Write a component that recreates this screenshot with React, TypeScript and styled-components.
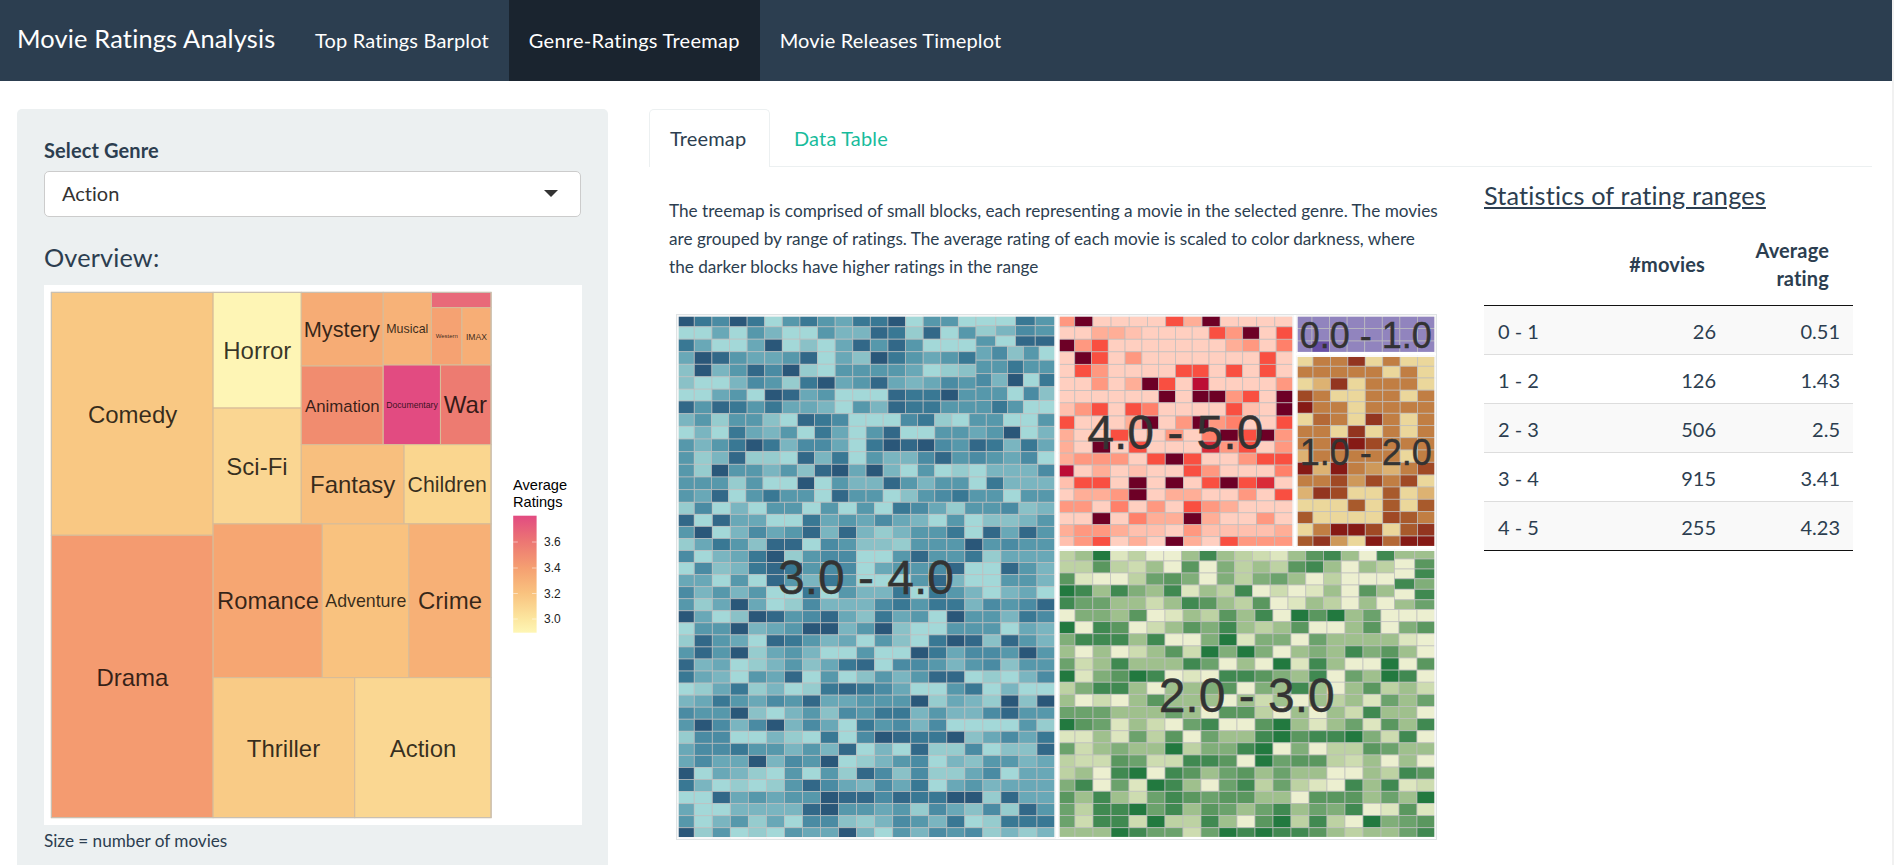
import React from 'react';
import styled, { createGlobalStyle } from 'styled-components';

const GlobalStyle = createGlobalStyle`
  * { box-sizing: border-box; }
  html, body { margin: 0; height: 100%; overflow: hidden; background: #fff; }
  body {
    font-family: Lato, "Liberation Sans", sans-serif;
    font-size: 20px;
    line-height: 1.42857;
    font-variant-ligatures: none;
    color: #2c3e50;
  }
`;

const Page = styled.div`
  width: 1892px;
  height: 865px;
  overflow: hidden;
`;
const Frame = styled.div`
  display: flex;
  width: 1894px;
  height: 865px;
  overflow: hidden;
  background: #f1f1f1;
  & > ${Page} { background: #fff; }
`;
const NavBar = styled.nav`
  display: flex;
  height: 81px;
  background: #2c3e50;
  color: #fff;
`;
const Brand = styled.div`
  width: 295px;
  padding: 20px 0 0 17px;
  font-size: 25.4px;
  line-height: 36px;
  letter-spacing: 0.17px;
  white-space: nowrap;
`;
const NavItem = styled.a<{ $active?: boolean }>`
  padding: 26px 20px 0;
  line-height: 29px;
  font-size: 20px;
  letter-spacing: ${(p) => (p.$active ? '0.27px' : '0.16px')};
  white-space: nowrap;
  background: ${(p) => (p.$active ? '#1a242f' : 'transparent')};
`;
const Main = styled.main`
  display: flex;
  align-items: flex-start;
  padding: 28px 20px 0 17px;
`;
const SideBar = styled.aside`
  width: 591px;
  height: 790px;
  flex: none;
  padding: 27px 26px 0 27px;
  background: #ecf0f1;
  border-radius: 5px;
`;
const Label = styled.div`
  font-weight: 700;
  line-height: 29px;
  letter-spacing: 0.12px;
  margin-bottom: 6px;
`;
const SelectBox = styled.div`
  display: flex;
  align-items: center;
  justify-content: space-between;
  width: 537px;
  height: 46px;
  padding: 0 22px 2px 17px;
  color: #333;
  background: #fff;
  border: 1px solid #ccc;
  border-radius: 5px;
`;
const Caret = styled.span`
  border: 7px solid transparent;
  border-top-color: #333;
  border-bottom: 0;
`;
const SubTitle = styled.h4`
  margin: 26px 0 14px;
  font-size: 25.3px;
  font-weight: 400;
  line-height: 28px;
  letter-spacing: 0.15px;
`;
const PlotCard = styled.div`
  width: 538px;
  height: 540px;
  background: #fff;
  svg { display: block; }
`;
const Note = styled.div`
  font-size: 17.2px;
  line-height: 32px;
  letter-spacing: -0.03px;
`;
const Content = styled.section`
  flex: none;
  width: 1223px;
  margin-left: 41px;
`;
const Tabs = styled.div`
  display: flex;
  height: 58px;
  border-bottom: 1px solid #ecf0f1;
`;
const Tab = styled.a<{ $active?: boolean }>`
  height: 58px;
  padding: ${(p) => (p.$active ? '14px 0 0 20px' : '15px 24px 0')};
  line-height: 28px;
  letter-spacing: 0.15px;
  color: ${(p) => (p.$active ? '#2c3e50' : '#18bc9c')};
  background: #fff;
  ${(p) => (p.$active ? 'width: 121px; border: 1px solid #ecf0f1; border-bottom: 0; border-radius: 5px 5px 0 0;' : 'height: 57px;')}
`;
const Columns = styled.div`
  display: flex;
  align-items: flex-start;
`;
const TreePanel = styled.div`
  width: 835px;
  flex: none;
  padding: 30px 0 0 20px;
`;
const Intro = styled.p`
  width: 785px;
  margin: 0 0 32px;
  font-size: 17.2px;
  letter-spacing: -0.008px;
  line-height: 28px;
  span { display: block; white-space: nowrap; }
`;
const TreeFrame = styled.div`
  margin-left: 7px;
  svg { display: block; }
`;
const StatsPanel = styled.div`
  width: 369px;
  padding-top: 11px;
`;
const StatsTitle = styled.h4`
  margin: 0;
  font-size: 25.3px;
  font-weight: 400;
  line-height: 34px;
  letter-spacing: 0.16px;
  text-decoration: underline;
  white-space: nowrap;
`;
const Table = styled.div`
  margin-top: 14px;
  border-bottom: 1px solid #111;
`;
const HeadRow = styled.div`
  display: grid;
  grid-template-columns: 115px 130px 124px;
  align-items: center;
  height: 80px;
  padding-bottom: 3px;
  border-bottom: 1px solid #111;
  font-weight: 700;
  line-height: 28px;
  letter-spacing: 0.15px;
  text-align: right;
  span { padding-right: 24px; }
`;
const BodyRow = styled.div`
  display: grid;
  grid-template-columns: 115px 130px 124px;
  height: 49px;
  line-height: 50px;
  text-align: right;
  border-top: 1px solid #ddd;
  &:nth-child(even) { background: #f9f9f9; }
  &:nth-child(2) { height: 48px; border-top: 0; }
  span { padding-right: 13px; }
  span:first-child { padding-left: 14px; text-align: left; }
`;

type Genre = [string, number, number, number, number, string, number, number, number];
/* name, left, top, right, bottom, fill, label size, label centre, label baseline */
const genres: Genre[] = [
  ['Comedy', 51.4, 292.4, 213.1, 535.3, '#f9c883', 24, 132.6, 423],
  ['Drama', 51.4, 535.3, 213.1, 817.6, '#f49b70', 24, 132.4, 685.6],
  ['Horror', 213.1, 292.4, 301.3, 408.1, '#fef5b5', 24, 257.3, 359.2],
  ['Sci-Fi', 213.1, 408.1, 301.3, 523.9, '#fad692', 24, 257, 475.3],
  ['Mystery', 301.3, 292.4, 383.2, 366, '#f6ac75', 21.8, 341.8, 337.2],
  ['Musical', 383.2, 292.4, 431.4, 365.3, '#f7b278', 12.4, 407.3, 333],
  ['', 431.4, 292.4, 491.1, 307.6, '#e86a79', 0, 0, 0],
  ['Western', 431.4, 307.6, 461.9, 365, '#f5a272', 6, 446.8, 338],
  ['IMAX', 461.9, 307.6, 491.1, 365, '#f7ae76', 8.6, 476.5, 339.8],
  ['Animation', 301.3, 366, 383.2, 444.6, '#f18c6f', 16.8, 342.4, 411.6],
  ['Documentary', 383.2, 365, 440.5, 444.6, '#e24b81', 8.7, 412, 407.8],
  ['War', 440.5, 365, 491.1, 444.6, '#ed7b71', 24, 465.4, 412.7],
  ['Fantasy', 301.3, 444.6, 404.1, 523.9, '#f8bf7e', 24, 352.7, 493.2],
  ['Children', 404.1, 444.6, 491.1, 523.9, '#fad68f', 21.3, 447.2, 492.4],
  ['Romance', 213.1, 523.9, 322.3, 677.6, '#f6a672', 23.8, 268, 609.4],
  ['Adventure', 322.3, 523.9, 408.9, 677.6, '#f9c27f', 17.8, 365.8, 607],
  ['Crime', 408.9, 523.9, 491.1, 677.6, '#f7b076', 24, 450, 609.4],
  ['Thriller', 213.1, 677.6, 354.7, 817.6, '#f9cb86', 24, 283.5, 756.5],
  ['Action', 354.7, 677.6, 491.1, 817.6, '#fad792', 24, 423, 756.5],
];
const scaleTicks: [string, number][] = [['3.6', 542], ['3.4', 568], ['3.2', 593.5], ['3.0', 619]];

function GenreTreemap() {
  return (
    <svg width="538" height="540" viewBox="44 285 538 540" fontFamily="Liberation Sans, sans-serif">
      <defs>
        <linearGradient id="ratingScale" x1="0" y1="0" x2="0" y2="1">
          <stop offset="0" stopColor="#e24b81" />
          <stop offset="0.22" stopColor="#ec7673" />
          <stop offset="0.45" stopColor="#f5a071" />
          <stop offset="0.66" stopColor="#f9c27f" />
          <stop offset="0.88" stopColor="#fce69f" />
          <stop offset="1" stopColor="#fef6b5" />
        </linearGradient>
      </defs>
      {genres.map(([name, l, t, r, b, fill, size, cx, base]) => (
        <g key={name}>
          <rect x={l} y={t} width={r - l} height={b - t} fill={fill} stroke="#d8bc98" strokeWidth="1.1" />
          {size > 0 && (
            <text x={cx} y={base} fontSize={size} textAnchor="middle" fill="#000" fillOpacity="0.78">{name}</text>
          )}
        </g>
      ))}
      <rect x="51.4" y="292.4" width="439.7" height="525.2" fill="none" stroke="#c8c0b4" strokeWidth="1.1" />
      <text x="513" y="490.4" fontSize="14.6">Average</text>
      <text x="513" y="506.5" fontSize="14.6">Ratings</text>
      <rect x="513.2" y="515.7" width="23.4" height="117" fill="url(#ratingScale)" />
      {scaleTicks.map(([label, y]) => (
        <g key={label}>
          <path d={`M513.2 ${y}h4.6M532 ${y}h4.6`} stroke="#fff" strokeOpacity="0.5" />
          <text x="544" y={y + 4.4} fontSize="12" fill="#222">{label}</text>
        </g>
      ))}
    </svg>
  );
}

const blues = ['#a3d8d8', '#96ccce', '#8ac1c7', '#7ab5c0', '#69a8b7', '#5698ab', '#4a8ba3', '#397894', '#326888', '#2a5779'];
const reds = ['#ffcfc0', '#ffc0ae', '#ffae97', '#ff9880', '#ff806a', '#f94f41', '#d92a38', '#bc0d35', '#6d0026'];
const purples = ['#9184be', '#684fa5'];
const browns = ['#ebd79b', '#ddb272', '#ce995a', '#c17e43', '#b46836', '#a85a2c', '#a04925', '#933520', '#861a15'];
const greens = ['#ecefd0', '#dde6bf', '#cddcb0', '#bdd2a3', '#9fc08d', '#80ae79', '#6ba26c', '#5a975f', '#408951', '#22793f'];

interface Zone {
  palette: string[];
  x: number;
  right: number;
  first?: number;
  ys: number[];
  rows: string;
}

const range = (from: number, to: number, n: number) =>
  Array.from({ length: n + 1 }, (_, i) => from + ((to - from) * i) / n);

/* Each digit of a row is a shade index into the zone's palette. */
const zones: Zone[] = [
  {
    palette: blues, x: 678, right: 976, first: 16.3,
    ys: [316, 326.8, 339.2, 351.7, 364.3, 376.8, 389.2, 401, 413.7],
    rows: '97697057547790550 00405300533871805 74004902048585000 49854458042975457 29358691055554012 20036517945843465 00450984500087795 85875744305387755',
  },
  {
    palette: blues, x: 976, right: 1055,
    ys: [316, 325.7, 336, 346.3, 360.2, 373.6, 386.8, 400.5, 413.7],
    rows: '0075 1365 5088 46250 55755 63907 55062 57500',
  },
  {
    palette: blues, x: 678, right: 1055, first: 16.3, ys: range(413.7, 502.3, 7),
    rows: '3515520876000671055005 0307435074058005545903 5357973664079896587374 5138110837053368565460 5195535289493050103336 5551500905338535507333 5480575508550256755055',
  },
  {
    palette: blues, x: 678, right: 1055, first: 16.3, ys: [...range(502.3, 827.7, 27), 837.7],
    rows:
      '160305505050764155623 808440074546430502235 590364583831355708485 147528806522155595655 603479156600585571444 ' +
      '062378756604556800853 440508537500058300553 635350070533707530340 514940163336757736568 940298568427450955376 ' +
      '055934599359200555043 185408753405207982853 585914530050097466595 834013524780665356255 743054805025358801036 ' +
      '014713017876400570300 347546584455591431929 655920352657735336855 596369364075636000051 166003107069877924647 ' +
      '466755353803081160228 464493659013560325534 904310505186261146044 730101586436470453444 008454559886877991844 ' +
      '400333389554516426185 503514066213653701777 915010544930536561313',
  },
  { palette: reds, x: 1059, right: 1293, first: 15.7, ys: [316, 326.8], rows: '3800005280000' },
  {
    palette: reds, x: 1059, right: 1293, first: 15.7,
    ys: [326.8, 339.3, 351.8, 364.4, 377.4, 390.5, 402.8, 416, 429.3],
    rows: '00221000053805 83500000002304 08503000000050 05300005505050 00302850700003 00000080883508 13505400005108 50002803834005',
  },
  {
    palette: reds, x: 1059, right: 1293, first: 15, ys: [...range(429.3, 536.6, 9), 546.5],
    rows: '2005003048583 2080500063503 2333058500355 7020100530004 1550808058560 0223802200305 3304030532000 0080422820030 2332110311112 1350208205333',
  },
  { palette: purples, x: 1297, right: 1435, first: 15, ys: [316, 328.5, 341, 352.5], rows: '00000000 00000000 01000000' },
  {
    palette: browns, x: 1297, right: 1435, first: 16,
    ys: [356.3, 366.3, 378, 390.2, 401.7, 413.3, 425.6, 437.7, 450, 462.3, 475, 487, 499.3, 511.6, 523.6, 536, 546.5],
    rows: '03370300 33333030 01703330 63003303 83303333 04307303 33070303 33886333 13333303 81832136 33626360 17600501 00050505 50000653 03886057 57208488',
  },
  {
    palette: greens, x: 1059, right: 1394.5, first: 16, ys: [550.3, 561, 573, 585, 597, 609.5],
    rows: '3491300484321478408 3373240705343784043 7100367505356403000 9848548143802014074 8664424874370143040',
  },
  { palette: greens, x: 1394.5, right: 1435, ys: [550.3, 559, 569, 578.8, 589.3, 599.8, 609.5], rows: '44 07 08 85 08 46' },
  {
    palette: greens, x: 1059, right: 1435, first: 16, ys: [...range(609.5, 827.7, 18), 837.5],
    rows:
      '055470143748097946000 908702475843470047057 588848005915506444410 404024729595045485740 624844486040918400907 ' +
      '915798010887548064980 358840445705484047342 402047444042404341646 666444640773040428440 976142068007941461748 ' +
      '114163706448978895280 624544935589050337644 322762288709677324040 340890874674644004387 580619840683631084812 ' +
      '748426876774407774649 638896847646846580171 628829338407938309567 444986626989887434468',
  },
];

function ZoneCells({ zone }: { zone: Zone }) {
  return (
    <g stroke="#bebebe" strokeWidth="0.9" strokeOpacity="0.75">
      {zone.rows.split(' ').flatMap((row, r) => {
        const first = zone.first ?? (zone.right - zone.x) / row.length;
        const step = (zone.right - zone.x - first) / (row.length - 1);
        return row.split('').map((shade, c) => (
          <rect
            key={`${r}-${c}`}
            x={c === 0 ? zone.x : zone.x + first + step * (c - 1)}
            y={zone.ys[r]}
            width={c === 0 ? first : step}
            height={zone.ys[r + 1] - zone.ys[r]}
            fill={zone.palette[Number(shade)]}
          />
        ));
      })}
    </g>
  );
}

const borders: [number, number, number, number][] = [
  [678, 316, 377, 521.7], [1059, 316, 234, 230.5], [1297, 316, 138, 36.5], [1297, 356.3, 138, 190.2], [1059, 550.3, 376, 287.2],
];
const rangeLabels: [string, number, number, number][] = [
  ['3.0 - 4.0', 866, 594.4, 48], ['4.0 - 5.0', 1175.3, 449, 48], ['2.0 - 3.0', 1246.7, 711.7, 48],
  ['0.0 - 1.0', 1365.8, 348, 36], ['1.0 - 2.0', 1365.8, 465, 36],
];

function RatingTreemap() {
  return (
    <svg width="761" height="527" viewBox="676 313 761 527" fontFamily="Liberation Sans, sans-serif">
      <rect x="676.5" y="314.5" width="760" height="525" fill="#fff" stroke="#dfe3e4" />
      {zones.map((zone, i) => <ZoneCells key={i} zone={zone} />)}
      {borders.map(([x, y, w, h]) => (
        <rect key={`${x}-${y}`} x={x} y={y} width={w} height={h} fill="none" stroke="#fff" strokeWidth="1.2" />
      ))}
      {rangeLabels.map(([text, x, y, size]) => (
        <text key={text} x={x} y={y} fontSize={size} textAnchor="middle" fill="#333" stroke="#333" strokeWidth="0.4">{text}</text>
      ))}
    </svg>
  );
}

const stats = [
  ['0 - 1', '26', '0.51'],
  ['1 - 2', '126', '1.43'],
  ['2 - 3', '506', '2.5'],
  ['3 - 4', '915', '3.41'],
  ['4 - 5', '255', '4.23'],
];

export default function App() {
  return (
    <Frame>
      <GlobalStyle />
      <Page>
        <NavBar>
          <Brand>Movie Ratings Analysis</Brand>
          <NavItem>Top Ratings Barplot</NavItem>
          <NavItem $active>Genre-Ratings Treemap</NavItem>
          <NavItem>Movie Releases Timeplot</NavItem>
        </NavBar>
        <Main>
          <SideBar>
            <Label>Select Genre</Label>
            <SelectBox>Action<Caret /></SelectBox>
            <SubTitle>Overview:</SubTitle>
            <PlotCard><GenreTreemap /></PlotCard>
            <Note>Size = number of movies</Note>
          </SideBar>
          <Content>
            <Tabs>
              <Tab $active>Treemap</Tab>
              <Tab>Data Table</Tab>
            </Tabs>
            <Columns>
              <TreePanel>
                <Intro>
                  <span>The treemap is comprised of small blocks, each representing a movie in the selected genre. The movies</span>
                  <span>are grouped by range of ratings. The average rating of each movie is scaled to color darkness, where</span>
                  <span>the darker blocks have higher ratings in the range</span>
                </Intro>
                <TreeFrame><RatingTreemap /></TreeFrame>
              </TreePanel>
              <StatsPanel>
                <StatsTitle>Statistics of rating ranges</StatsTitle>
                <Table>
                  <HeadRow>
                    <span />
                    <span>#movies</span>
                    <span>Average rating</span>
                  </HeadRow>
                  {stats.map(([label, count, average]) => (
                    <BodyRow key={label}>
                      <span>{label}</span>
                      <span>{count}</span>
                      <span>{average}</span>
                    </BodyRow>
                  ))}
                </Table>
              </StatsPanel>
            </Columns>
          </Content>
        </Main>
      </Page>
    </Frame>
  );
}
